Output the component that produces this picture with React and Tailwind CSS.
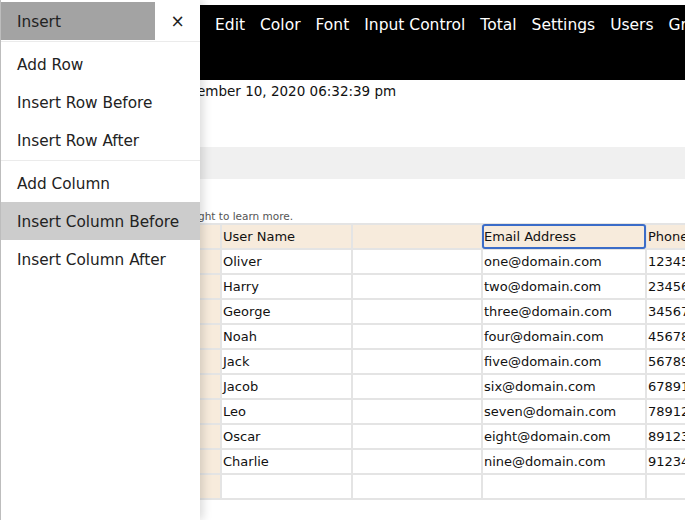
import React from "react";

const rows = [
  ["Oliver", "one@domain.com", "1234567890"],
  ["Harry", "two@domain.com", "2345678901"],
  ["George", "three@domain.com", "3456789012"],
  ["Noah", "four@domain.com", "4567890123"],
  ["Jack", "five@domain.com", "5678901234"],
  ["Jacob", "six@domain.com", "6789123456"],
  ["Leo", "seven@domain.com", "7891234567"],
  ["Oscar", "eight@domain.com", "8912345678"],
  ["Charlie", "nine@domain.com", "9123456789"],
  ["", "", ""],
];

const menu = ["Edit", "Color", "Font", "Input Control", "Total", "Settings", "Users", "Groups"];

function Item({ label, active }) {
  return (
    <div
      className={
        "h-[38px] flex items-center pl-[16px] pt-[3px] text-[15.3px] text-[#222] " +
        (active ? "bg-[#cccccc]" : "")
      }
    >
      {label}
    </div>
  );
}

export default function App() {
  return (
    <div
      className="relative w-[685px] h-[520px] overflow-hidden bg-white text-[#111]"
      style={{ fontFamily: '"DejaVu Sans", Verdana, sans-serif' }}
    >
      {/* page */}
      <div className="pt-[5px]">
        <div className="h-[75px] bg-black flex gap-[15px] pl-[215px] pt-[9px] text-white text-[15.5px] whitespace-nowrap">
          {menu.map((m) => (
            <span key={m}>{m}</span>
          ))}
        </div>
        <div className="h-[20px] leading-[20px] pt-[1px] pl-[197px] text-[13.5px] whitespace-nowrap">
          ember 10, 2020 06:32:39 pm
        </div>
        <div className="mt-[47px] h-[32px] bg-[#f0f0f0]" />
        <div className="mt-[30px] h-[14px] leading-[14px] pl-[198px] text-[10.5px] text-[#555] whitespace-nowrap">
          ght to learn more.
        </div>
        <div className="ml-[198px] p-[2px] pr-0 bg-[#e4e4e4] grid grid-cols-[20px_129px_128px_162px_1fr] gap-[2px] text-[13px] whitespace-nowrap">
          <div className="h-[23px] bg-[#f7ebdc]" />
          <div className="h-[23px] bg-[#f7ebdc] pl-[1px] leading-[23px]">User Name</div>
          <div className="h-[23px] bg-[#f7ebdc]" />
          <div className="relative h-[23px] bg-[#f7ebdc] pl-[1px] leading-[23px]">
            Email Address
            <span className="absolute -inset-[1px] border-2 border-[#3b6cc8] rounded-[3px]" />
          </div>
          <div className="h-[23px] bg-[#f7ebdc] pl-[1px] leading-[23px] overflow-hidden">Phone Number</div>
          {rows.map((r, i) => (
            <React.Fragment key={i}>
              <div className="h-[23px] bg-[#f7ebdc]" />
              <div className="h-[23px] bg-white pl-[1px] leading-[23px]">{r[0]}</div>
              <div className="h-[23px] bg-white" />
              <div className="h-[23px] bg-white pl-[1px] leading-[23px]">{r[1]}</div>
              <div className="h-[23px] bg-white pl-[1px] leading-[23px] overflow-hidden">{r[2]}</div>
            </React.Fragment>
          ))}
        </div>
      </div>

      {/* drawer */}
      <div className="absolute left-0 top-0 bottom-0 w-[200px] bg-white border-l border-[#bdbdbd] shadow-[3px_0_9px_rgba(0,0,0,0.15)]">
        <div className="h-[42px] pt-[2px] border-b border-[#ebebeb] flex">
          <div className="w-[154px] h-[38px] bg-[#a3a3a3] flex items-center pl-[16px] pt-[3px] text-[15.3px] text-[#222]">
            Insert
          </div>
          <div className="flex-1 flex items-center justify-center pt-[1px] text-[17px] text-[#222]">×</div>
        </div>
        <div className="pt-[3px] pb-[1px] border-b border-[#ebebeb]">
          <Item label="Add Row" />
          <Item label="Insert Row Before" />
          <Item label="Insert Row After" />
        </div>
        <div className="pt-[3px]">
          <Item label="Add Column" />
          <Item label="Insert Column Before" active />
          <Item label="Insert Column After" />
        </div>
      </div>
    </div>
  );
}
